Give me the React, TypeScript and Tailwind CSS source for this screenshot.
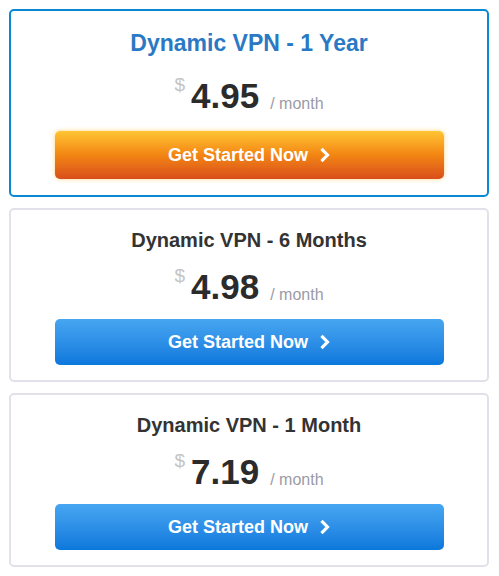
type Plan = {
  title: string
  price: string
  featured?: boolean
}

const plans: Plan[] = [
  { title: 'Dynamic VPN - 1 Year', price: '4.95', featured: true },
  { title: 'Dynamic VPN - 6 Months', price: '4.98' },
  { title: 'Dynamic VPN - 1 Month', price: '7.19' },
]

function Chevron() {
  return (
    <svg width="11" height="16" viewBox="0 0 11 16" className="ml-[11px]">
      <polyline points="2.5,1.8 8.5,8 2.5,14.2" fill="none" stroke="white" strokeWidth="3.2" />
    </svg>
  )
}

function PlanCard({ plan }: { plan: Plan }) {
  const f = plan.featured
  return (
    <div
      className={
        f
          ? 'rounded-[5px] border-2 border-[#0a88d2] bg-white pt-[19px] pb-[16px]'
          : 'rounded-[5px] border-2 border-[#e1e1ea] bg-white pt-[18px] pb-[15px]'
      }
    >
      <h2
        className={
          f
            ? 'text-center text-[23px] leading-[26px] font-bold text-[#2a79c4]'
            : 'text-center text-[20px] leading-[24px] font-bold text-[#333333]'
        }
      >
        {plan.title}
      </h2>

      <div className={f ? 'mt-[22px] flex justify-center items-start' : 'mt-[17px] flex justify-center items-start'}>
        <span className="text-[19px] leading-none text-[#c4c4c4] mt-[-3px] mr-[6px]">$</span>
        <span className="text-[35px] leading-[35px] font-bold text-[#2b2b2b]">{plan.price}</span>
        <span className="text-[16px] leading-none text-[#9b9ba6] ml-[11px] mt-[18px]">/ month</span>
      </div>

      <button
        className={
          f
            ? 'mx-auto mt-[18px] flex h-[48px] w-[389px] items-center justify-center rounded-[5px] bg-gradient-to-b from-[#ffc533] via-[#f28512] to-[#d84d1b] text-[18px] font-bold text-white shadow-[0_0_4px_rgba(255,200,90,0.8)]'
            : 'mx-auto mt-[15px] flex h-[46px] w-[389px] items-center justify-center rounded-[5px] bg-gradient-to-b from-[#47a6f1] to-[#0a78dc] text-[18px] font-bold text-white'
        }
      >
        Get Started Now
        <Chevron />
      </button>
    </div>
  )
}

export default function App() {
  return (
    <div
      className="min-h-[576px] bg-white pt-[9px] pl-[9px] pr-[10px] flex flex-col gap-[11px]"
      style={{ fontFamily: '"Liberation Sans", Arial, sans-serif' }}
    >
      {plans.map((p) => (
        <PlanCard key={p.title} plan={p} />
      ))}
    </div>
  )
}
